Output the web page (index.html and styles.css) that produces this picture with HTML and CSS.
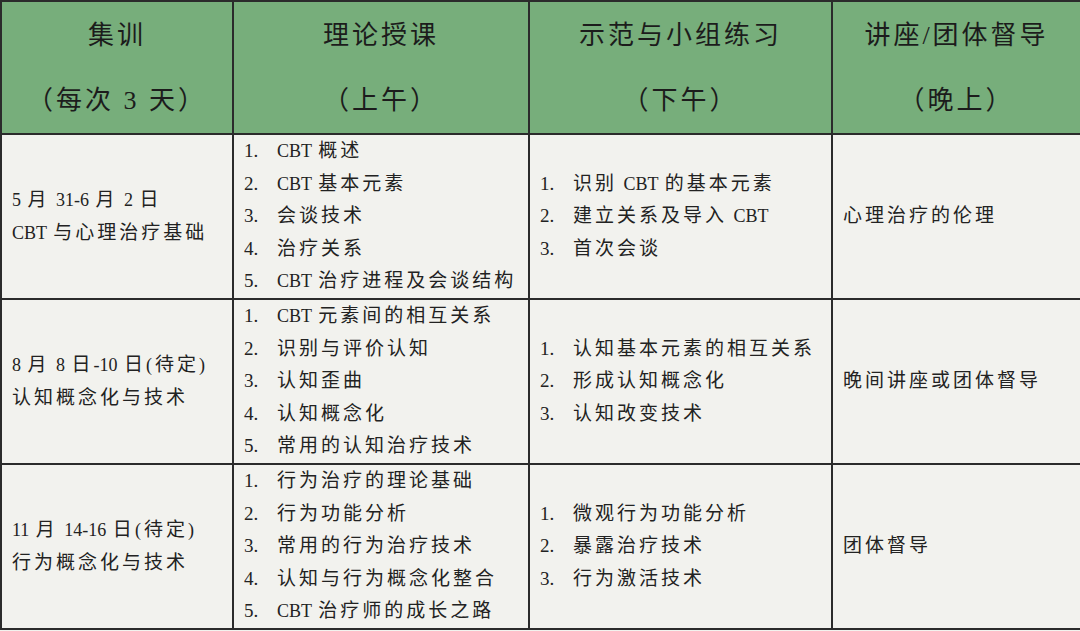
FILE: index.html
```html
<!DOCTYPE html>
<html lang="zh">
<head>
<meta charset="utf-8">
<link rel="stylesheet" href="styles.css">
</head>
<body>
<table class="schedule">
  <colgroup>
    <col class="c1"><col class="c2"><col class="c3"><col class="c4">
  </colgroup>
  <thead>
    <tr>
      <th><div>集训</div><div>（每次 3 天）</div></th>
      <th><div>理论授课</div><div>（上午）</div></th>
      <th><div>示范与小组练习</div><div>（下午）</div></th>
      <th><div>讲座/团体督导</div><div>（晚上）</div></th>
    </tr>
  </thead>
  <tbody>
    <tr>
      <td class="when"><div class="ln"><span class="lt">5 </span>月<span class="lt"> 31-6 </span>月<span class="lt"> 2 </span>日</div><div class="ln"><span class="lt">CBT </span>与心理治疗基础</div></td>
      <td><ol class="list">
        <li><span class="n">1.</span><span class="lt">CBT </span>概述</li>
        <li><span class="n">2.</span><span class="lt">CBT </span>基本元素</li>
        <li><span class="n">3.</span>会谈技术</li>
        <li><span class="n">4.</span>治疗关系</li>
        <li><span class="n">5.</span><span class="lt">CBT </span>治疗进程及会谈结构</li>
      </ol></td>
      <td><ol class="list">
        <li><span class="n">1.</span>识别<span class="lt"> CBT </span>的基本元素</li>
        <li><span class="n">2.</span>建立关系及导入<span class="lt"> CBT</span></li>
        <li><span class="n">3.</span>首次会谈</li>
      </ol></td>
      <td class="eve">心理治疗的伦理</td>
    </tr>
    <tr>
      <td class="when"><div class="ln"><span class="lt">8 </span>月<span class="lt"> 8 </span>日<span class="lt">-10 </span>日<span class="lt pl">(</span>待定<span class="lt">)</span></div><div class="ln">认知概念化与技术</div></td>
      <td><ol class="list">
        <li><span class="n">1.</span><span class="lt">CBT </span>元素间的相互关系</li>
        <li><span class="n">2.</span>识别与评价认知</li>
        <li><span class="n">3.</span>认知歪曲</li>
        <li><span class="n">4.</span>认知概念化</li>
        <li><span class="n">5.</span>常用的认知治疗技术</li>
      </ol></td>
      <td><ol class="list">
        <li><span class="n">1.</span>认知基本元素的相互关系</li>
        <li><span class="n">2.</span>形成认知概念化</li>
        <li><span class="n">3.</span>认知改变技术</li>
      </ol></td>
      <td class="eve">晚间讲座或团体督导</td>
    </tr>
    <tr>
      <td class="when"><div class="ln"><span class="lt">11 </span>月<span class="lt"> 14-16 </span>日<span class="lt pl">(</span>待定<span class="lt">)</span></div><div class="ln">行为概念化与技术</div></td>
      <td><ol class="list">
        <li><span class="n">1.</span>行为治疗的理论基础</li>
        <li><span class="n">2.</span>行为功能分析</li>
        <li><span class="n">3.</span>常用的行为治疗技术</li>
        <li><span class="n">4.</span>认知与行为概念化整合</li>
        <li><span class="n">5.</span><span class="lt">CBT </span>治疗师的成长之路</li>
      </ol></td>
      <td><ol class="list">
        <li><span class="n">1.</span>微观行为功能分析</li>
        <li><span class="n">2.</span>暴露治疗技术</li>
        <li><span class="n">3.</span>行为激活技术</li>
      </ol></td>
      <td class="eve">团体督导</td>
    </tr>
  </tbody>
</table>
</body>
</html>
```

FILE: styles.css
```css
html, body {
  margin: 0;
  padding: 0;
  background: #f2f2ee;
}
body {
  font-family: "Liberation Serif", "Noto Sans CJK SC", serif;
  color: #222;
  width: 1080px;
  height: 631px;
  overflow: hidden;
}
.schedule {
  border-collapse: collapse;
  table-layout: fixed;
  width: 1080px;
}
.c1 { width: 232px; }
.c2 { width: 296px; }
.c3 { width: 303px; }
.c4 { width: 249px; }
.schedule th,
.schedule td {
  border: 2px solid #2b2b2b;
  padding: 0 0 0 10px;
  vertical-align: middle;
  text-align: left;
}
.schedule th {
  background: #77ae7b;
  height: 131px;
  text-align: center;
  padding: 0;
  font-weight: normal;
  font-size: 26px;
  letter-spacing: 3px;
  line-height: 65px;
  color: #1c1c1c;
}
.schedule td {
  height: 163px;
  font-size: 19px;
  letter-spacing: 3px;
  line-height: 32.6px;
  background: #f2f2ee;
}
.when { letter-spacing: 2.5px; }
.ln,
.list li {
  height: 32.6px;
  line-height: 32.6px;
  white-space: nowrap;
}
.lt {
  letter-spacing: 0;
  word-spacing: 2px;
  font-size: 18px;
}
.pl { margin-right: 3px; }
.list {
  list-style: none;
  margin: 0;
  padding: 0;
}
.n {
  display: inline-block;
  width: 33px;
  letter-spacing: 0;
  font-size: 19px;
}
```
